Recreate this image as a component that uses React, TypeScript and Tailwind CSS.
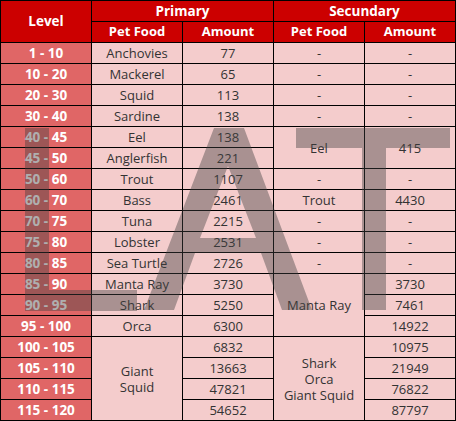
import type React from "react";

type Cell = { text: React.ReactNode; span?: number };
type Row = { level: string; food: Cell | null; amount: string; food2: Cell | null; amount2: Cell | null };

const dash = { text: "-" };

const rows: Row[] = [
	{ level: "1 - 10", food: { text: "Anchovies" }, amount: "77", food2: dash, amount2: dash },
	{ level: "10 - 20", food: { text: "Mackerel" }, amount: "65", food2: dash, amount2: dash },
	{ level: "20 - 30", food: { text: "Squid" }, amount: "113", food2: dash, amount2: dash },
	{ level: "30 - 40", food: { text: "Sardine" }, amount: "138", food2: dash, amount2: dash },
	{ level: "40 - 45", food: { text: "Eel" }, amount: "138", food2: { text: "Eel", span: 2 }, amount2: { text: "415", span: 2 } },
	{ level: "45 - 50", food: { text: "Anglerfish" }, amount: "221", food2: null, amount2: null },
	{ level: "50 - 60", food: { text: "Trout" }, amount: "1107", food2: dash, amount2: dash },
	{ level: "60 - 70", food: { text: "Bass" }, amount: "2461", food2: { text: "Trout" }, amount2: { text: "4430" } },
	{ level: "70 - 75", food: { text: "Tuna" }, amount: "2215", food2: dash, amount2: dash },
	{ level: "75 - 80", food: { text: "Lobster" }, amount: "2531", food2: dash, amount2: dash },
	{ level: "80 - 85", food: { text: "Sea Turtle" }, amount: "2726", food2: dash, amount2: dash },
	{ level: "85 - 90", food: { text: "Manta Ray" }, amount: "3730", food2: { text: "Manta Ray", span: 3 }, amount2: { text: "3730" } },
	{ level: "90 - 95", food: { text: "Shark" }, amount: "5250", food2: null, amount2: { text: "7461" } },
	{ level: "95 - 100", food: { text: "Orca" }, amount: "6300", food2: null, amount2: { text: "14922" } },
	{
		level: "100 - 105",
		food: { text: <>Giant<br />Squid</>, span: 4 },
		amount: "6832",
		food2: { text: <>Shark<br />Orca<br />Giant Squid</>, span: 4 },
		amount2: { text: "10975" },
	},
	{ level: "105 - 110", food: null, amount: "13663", food2: null, amount2: { text: "21949" } },
	{ level: "110 - 115", food: null, amount: "47821", food2: null, amount2: { text: "76822" } },
	{ level: "115 - 120", food: null, amount: "54652", food2: null, amount2: { text: "87797" } },
];

const spanClass: Record<number, string> = {
	1: "",
	2: "row-span-2",
	3: "row-span-3",
	4: "row-span-4",
};

const body = "bg-[#f4cccc] text-[#333] flex items-center justify-center text-center leading-[16px]";
const head = "bg-[#cc0000] text-white font-bold flex items-center justify-center";

function BodyCell({ cell }: { cell: Cell | null }) {
	if (!cell) return null;
	return <div className={`${body} ${spanClass[cell.span ?? 1]}`}>{cell.text}</div>;
}

export default function App() {
	return (
		<div className="relative w-[456px] h-[421px] font-['Open_Sans',sans-serif] text-[13px]">
			<div className="grid grid-cols-[repeat(5,90px)] auto-rows-[20px] gap-px p-px bg-black">
				<div className={`${head} row-span-2 text-[13.5px]`}>Level</div>
				<div className={`${head} col-span-2 text-[13.5px]`}>Primary</div>
				<div className={`${head} col-span-2 text-[13.5px]`}>Secundary</div>
				<div className={head}>Pet Food</div>
				<div className={head}>Amount</div>
				<div className={head}>Pet Food</div>
				<div className={head}>Amount</div>

				{rows.map((r) => (
					<div key={r.level} className="contents">
						<div className="bg-[#e06666] text-white font-bold text-[13.5px] flex items-center justify-center">
							{r.level}
						</div>
						<BodyCell cell={r.food} />
						<div className={body}>{r.amount}</div>
						<BodyCell cell={r.food2} />
						<BodyCell cell={r.amount2} />
					</div>
				))}
			</div>

			{/* LAT watermark */}
			<svg
				className="absolute inset-0 pointer-events-none"
				width="456"
				height="421"
				viewBox="0 0 456 421"
			>
				<g fill="#404040" opacity="0.42">
					<path d="M25 128 H49 V290 H137 V311 H25 Z M214 128 H244 L312 310 H282 L261 253 H195 L174 310 H144 Z M200 238 L228 166 L256 238 Z M296 128 H450 V148 H386 V310 H362 V148 H296 Z" fillRule="evenodd" />
				</g>
			</svg>
		</div>
	);
}
